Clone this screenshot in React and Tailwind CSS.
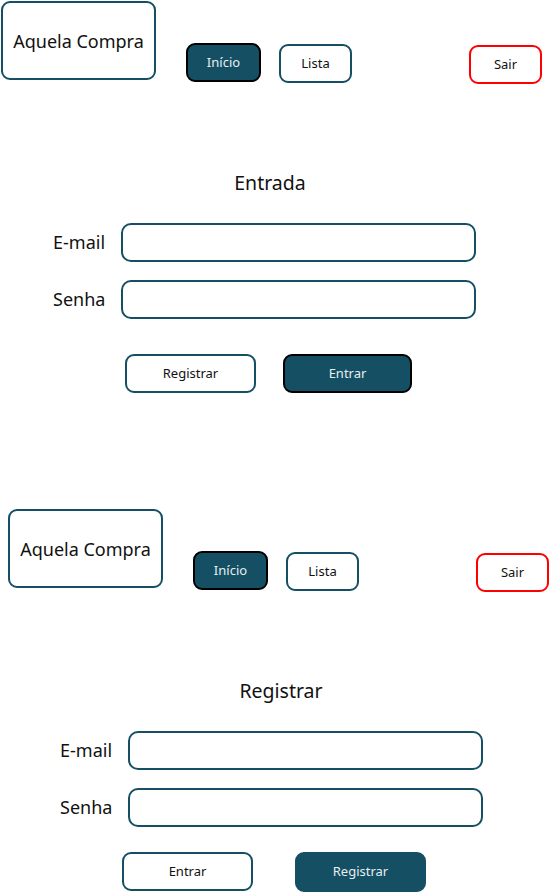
const font = { fontFamily: '"Noto Sans", "Open Sans", sans-serif' }

function NavBar() {
  return (
    <div className="flex items-start">
      <div className="flex h-[79px] w-[155px] items-center justify-center rounded-[9px] border-2 border-[#154f63] pt-[2px] text-[18px] text-[#111]">
        Aquela Compra
      </div>
      <button className="ml-[30px] mt-[42px] h-[39px] w-[75px] rounded-[9px] border-2 border-black bg-[#154f64] text-[13px] text-[#e6eef0]">
        Início
      </button>
      <button className="ml-[18px] mt-[43px] h-[39px] w-[73px] rounded-[9px] border-2 border-[#154f63] bg-white text-[13px] text-[#111]">
        Lista
      </button>
      <button className="ml-[117px] mt-[44px] h-[39px] w-[73px] rounded-[9px] border-2 border-[#ff0000] bg-white text-[13px] text-[#111]">
        Sair
      </button>
    </div>
  )
}

function Field({ label }) {
  return (
    <div className="flex items-center">
      <span className="w-[120px] pl-[52px] text-[18px] text-[#111]">{label}</span>
      <div className="h-[39px] w-[355px] rounded-[10px] border-2 border-[#154f63] bg-white" />
    </div>
  )
}

function Screen({ title, titlePad, left, right, btnTop, leftX, gap }) {
  return (
    <div className="w-[542px]">
      <NavBar />
      <h2 className={`mt-[87px] text-center text-[19.5px] leading-[24px] text-[#111] ${titlePad}`}>{title}</h2>
      <div className="mt-[28px] flex flex-col gap-[18px]">
        <Field label="E-mail" />
        <Field label="Senha" />
      </div>
      <div className={`flex ${btnTop} ${leftX} ${gap}`}>
        <button className="h-[39px] w-[131px] rounded-[9px] border-2 border-[#154f63] bg-white text-[13px] text-[#111]">
          {left}
        </button>
        {right}
      </div>
    </div>
  )
}

export default function App() {
  return (
    <div className="min-h-[894px] bg-white" style={font}>
      <div className="pl-[1px] pt-[1px]">
        <Screen
          title="Entrada"
          titlePad="pr-[4px]"
          left="Registrar"
          btnTop="mt-[35px]"
          leftX="pl-[124px]"
          gap="gap-[27px]"
          right={
            <button className="h-[39px] w-[129px] rounded-[9px] border-2 border-black bg-[#154f64] text-[13px] text-[#e6eef0]">
              Entrar
            </button>
          }
        />
      </div>
      <div className="pl-[8px] pt-[116px]">
        <Screen
          title="Registrar"
          titlePad="pl-[4px]"
          left="Entrar"
          btnTop="mt-[25px]"
          leftX="pl-[114px]"
          gap="gap-[42px]"
          right={
            <button className="h-[40px] w-[131px] rounded-[9px] border-2 border-[#154f63] bg-[#154f64] text-[13px] text-[#e6eef0]">
              Registrar
            </button>
          }
        />
      </div>
    </div>
  )
}
